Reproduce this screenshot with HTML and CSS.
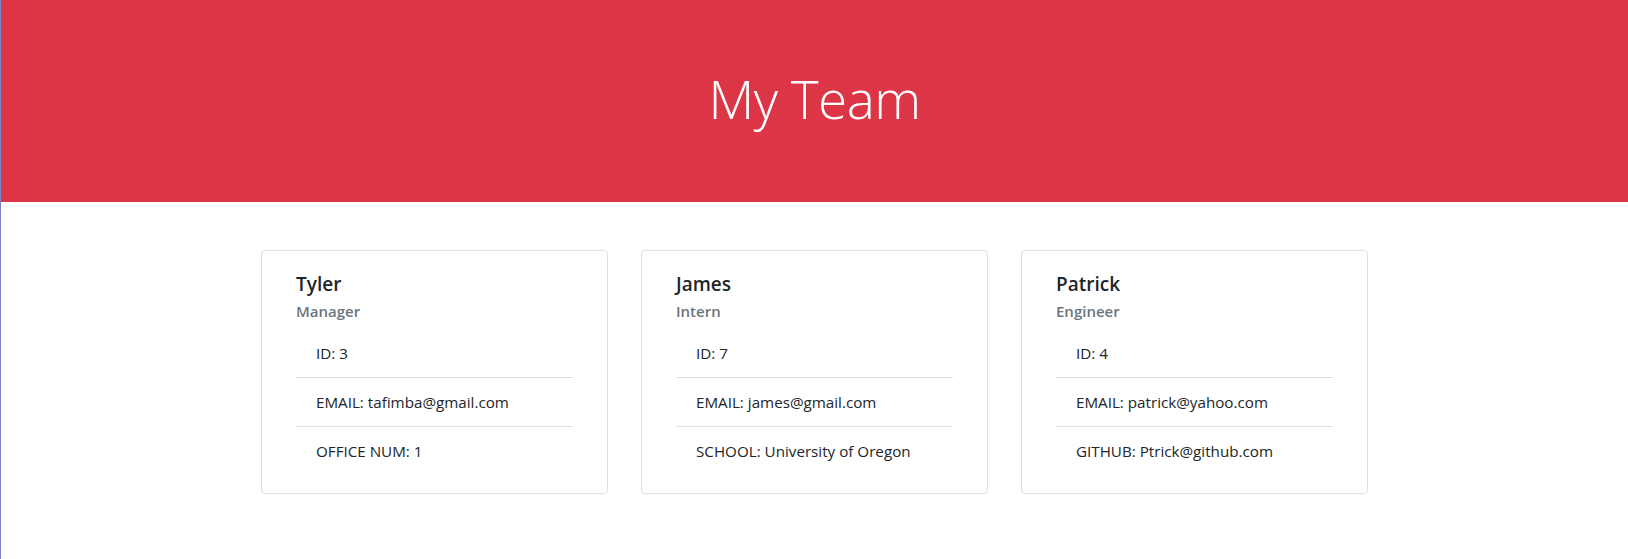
FILE: index.html
```html
<!DOCTYPE html>
<html lang="en">
<head>
<meta charset="utf-8">
<title>My Team</title>
<link rel="stylesheet" href="styles.css">
</head>
<body>
<header class="jumbotron">
  <h1 class="display-title">My Team</h1>
</header>
<main class="team">
  <section class="card">
    <h5 class="card-title">Tyler</h5>
    <h6 class="card-subtitle">Manager</h6>
    <ul class="list-group">
      <li class="list-item">ID: 3</li>
      <li class="list-item">EMAIL: tafimba@gmail.com</li>
      <li class="list-item">OFFICE NUM: 1</li>
    </ul>
  </section>
  <section class="card">
    <h5 class="card-title">James</h5>
    <h6 class="card-subtitle">Intern</h6>
    <ul class="list-group">
      <li class="list-item">ID: 7</li>
      <li class="list-item">EMAIL: james@gmail.com</li>
      <li class="list-item">SCHOOL: University of Oregon</li>
    </ul>
  </section>
  <section class="card">
    <h5 class="card-title">Patrick</h5>
    <h6 class="card-subtitle">Engineer</h6>
    <ul class="list-group">
      <li class="list-item">ID: 4</li>
      <li class="list-item">EMAIL: patrick@yahoo.com</li>
      <li class="list-item">GITHUB: Ptrick@github.com</li>
    </ul>
  </section>
</main>
</body>
</html>
```
FILE: styles.css
```css
html, body {
  margin: 0;
  padding: 0;
}
body {
  background: #fff;
  color: #212529;
  font-family: "Open Sans", "Noto Sans", sans-serif;
  font-size: 16px;
  line-height: 1.5;
  border-left: 1px solid #7f7fd2;
  min-height: 559px;
  box-sizing: border-box;
}
.jumbotron {
  background: #dc3545;
  height: 202px;
  display: flex;
  align-items: center;
  justify-content: center;
}
.display-title {
  margin: 0;
  color: #fff;
  font-weight: 300;
  font-size: 53px;
  line-height: 1.2;
  letter-spacing: -0.5px;
  transform: translateY(-2px);
}
.team {
  display: grid;
  grid-template-columns: repeat(3, 347px);
  column-gap: 33px;
  justify-content: center;
  margin-top: 48px;
}
.card {
  border: 1px solid rgba(0, 0, 0, 0.125);
  border-radius: 4px;
  padding: 21px 34px 19px;
  height: 244px;
  box-sizing: border-box;
}
.card-title {
  margin: 0 0 12px;
  font-size: 19px;
  font-weight: 600;
  line-height: 24px;
}
.card-subtitle {
  margin: -6px 0 8px;
  font-size: 15px;
  font-weight: 600;
  line-height: 19px;
  color: #6c757d;
}
.list-group {
  list-style: none;
  margin: 0;
  padding: 0;
}
.list-item {
  padding: 12px 20px;
  font-size: 15.2px;
  line-height: 24px;
  border-bottom: 1px solid rgba(0, 0, 0, 0.125);
}
.list-item:last-child {
  border-bottom: none;
}
```
